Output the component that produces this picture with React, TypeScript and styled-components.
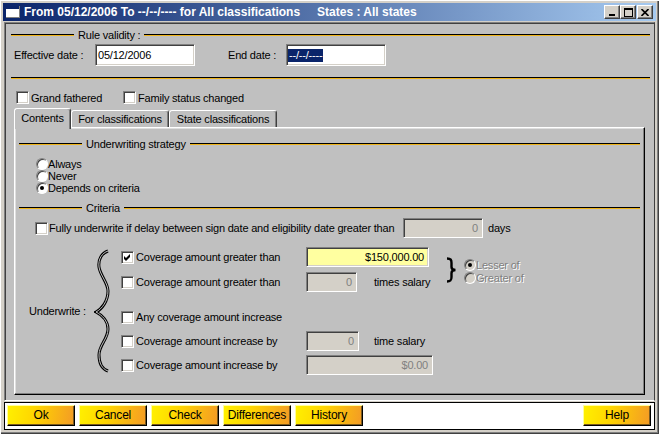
import React from 'react';
import styled, { createGlobalStyle } from 'styled-components';

const GlobalStyle = createGlobalStyle`
  * { box-sizing: border-box; }
  html, body { margin: 0; padding: 0; background: #d4d0c8; }
  body {
    font-family: 'Liberation Sans', Arial, sans-serif;
    font-size: 11px;
    letter-spacing: -0.2px;
    color: #000;
  }
`;

const Window = styled.div`
  width: 659px;
  height: 434px;
  padding: 3px 3px 4px 3px;
  background: #d4d0c8;
  box-shadow: inset 1px 1px 0 #fff, inset -1px -1px 0 #404040, inset -2px -2px 0 #808080;
  display: flex;
  flex-direction: column;
`;

const TitleBar = styled.div`
  height: 18px;
  flex: none;
  display: flex;
  align-items: center;
  padding: 0 3px 0 3px;
  background: linear-gradient(to right, #0a246a, #a6caf0);
  color: #fff;
  font-family: 'Liberation Sans', Arial, sans-serif;
  font-weight: bold;
  font-size: 12px;
  letter-spacing: 0;
  white-space: pre;
`;

const TitleText = styled.span`
  margin-left: 4px;
`;

const TitleExtra = styled.span`
  margin-left: 17px;
`;

const WinButtons = styled.div`
  margin-left: auto;
  display: flex;
`;

const WinButton = styled.div<{ $gap?: number }>`
  width: 16px;
  height: 14px;
  margin-left: ${p => p.$gap ?? 0}px;
  background: #d4d0c8;
  border: 1px solid;
  border-color: #fff #404040 #404040 #fff;
  box-shadow: inset -1px -1px 0 #808080;
  display: flex;
  align-items: center;
  justify-content: center;
`;

const Client = styled.div`
  height: 379px;
  flex: none;
  margin: 1px 1px 0;
  border: 1px solid;
  border-color: #808080 #404040 #fff #808080;
  box-shadow: inset 1px 1px 0 #404040;
  background: #c0c0c0;
  padding: 5px 4px 0 6px;
  display: flex;
  flex-direction: column;
`;

const Section = styled.div<{ $mt?: number }>`
  display: flex;
  align-items: center;
  height: 14px;
  flex: none;
  margin-top: ${p => p.$mt ?? 0}px;
`;

const Rule = styled.div<{ $w?: number }>`
  height: 2px;
  flex: ${p => (p.$w ? `0 0 ${p.$w}px` : '1')};
  background: linear-gradient(#000 50%, #f0b418 50%);
`;

const SectionLabel = styled.span`
  padding: 0 4px;
  line-height: 14px;
  white-space: nowrap;
`;

const DateRow = styled.div`
  display: flex;
  align-items: center;
  height: 22px;
  flex: none;
  margin-top: 2px;
  padding-left: 3px;
`;

const FieldLabel = styled.span<{ $w: number; $ml?: number }>`
  width: ${p => p.$w}px;
  margin-left: ${p => p.$ml ?? 0}px;
  white-space: nowrap;
`;

type Tone = 'white' | 'yellow' | 'off';

const Field = styled.div<{ $w: number; $h?: number; $tone?: Tone; $right?: boolean; $pl?: number }>`
  width: ${p => p.$w}px;
  height: ${p => p.$h ?? 20}px;
  flex: none;
  border: 1px solid;
  border-color: #808080 #fff #fff #808080;
  box-shadow: inset 1px 1px 0 #404040, inset -1px -1px 0 #d4d0c8;
  background: ${p => (p.$tone === 'yellow' ? '#ffffa0' : p.$tone === 'off' ? '#d4d0c8' : '#fff')};
  color: ${p => (p.$tone === 'off' ? '#808080' : '#000')};
  display: flex;
  align-items: center;
  justify-content: ${p => (p.$right ? 'flex-end' : 'flex-start')};
  padding: 0 4px 0 ${p => p.$pl ?? 2}px;
  line-height: 13px;
  white-space: nowrap;
`;

const Selection = styled.span`
  background: #0a246a;
  color: #fff;
  padding: 0 1px;
  line-height: 13px;
`;

const CheckRow = styled.div`
  display: flex;
  align-items: center;
  height: 13px;
  flex: none;
  margin-top: 6px;
  padding-left: 5px;
`;

const CheckItem = styled.div<{ $w?: number }>`
  display: flex;
  align-items: center;
  gap: 2px;
  ${p => (p.$w ? `width: ${p.$w}px;` : '')}
  white-space: nowrap;
`;

const Box = styled.div`
  width: 13px;
  height: 13px;
  flex: none;
  border: 1px solid;
  border-color: #808080 #fff #fff #808080;
  box-shadow: inset 1px 1px 0 #404040, inset -1px -1px 0 #d4d0c8;
  background: #fff;
  display: flex;
  align-items: center;
  justify-content: center;
`;

const Checkbox = ({ checked }: { checked?: boolean }) => (
  <Box>
    {checked && (
      <svg width="7" height="7" viewBox="0 0 7 7">
        <path d="M0 2 L2 4 L6 0 L6 3 L2 7 L0 5 Z" fill="#000" />
      </svg>
    )}
  </Box>
);

const TabStrip = styled.div`
  display: flex;
  align-items: flex-end;
  height: 19px;
  flex: none;
  margin: 4px 0 0 3px;
  position: relative;
  z-index: 1;
`;

const Tab = styled.div<{ $w: number; $active?: boolean }>`
  width: ${p => p.$w}px;
  height: ${p => (p.$active ? 21 : 17)}px;
  margin-bottom: ${p => (p.$active ? -2 : 0)}px;
  padding-bottom: ${p => (p.$active ? 3 : 0)}px;
  background: #c0c0c0;
  border: 1px solid;
  border-bottom: none;
  border-color: #fff #404040 transparent #fff;
  box-shadow: inset -1px 0 0 #808080;
  border-radius: 3px 3px 0 0;
  display: flex;
  align-items: center;
  justify-content: center;
  white-space: nowrap;
`;

const TabPanel = styled.div`
  flex: 1;
  margin: 0 5px 5px 3px;
  border: 1px solid;
  border-color: #fff #000 #000 #fff;
  box-shadow: inset -1px -1px 0 #808080, inset 1px 1px 0 #dfdfdf;
  padding: 9px 4px 0 4px;
  display: flex;
  flex-direction: column;
`;

const RadioList = styled.div`
  margin-top: 7px;
  padding-left: 17px;
  display: flex;
  flex-direction: column;
`;

const RadioRow = styled.div<{ $h?: number }>`
  height: ${p => p.$h ?? 12}px;
  display: flex;
  align-items: center;
  white-space: nowrap;
`;

const RadioCircle = styled.div<{ $off?: boolean }>`
  width: 12px;
  height: 12px;
  flex: none;
  border-radius: 50%;
  border: 1px solid;
  border-color: #808080 #fff #fff #808080;
  box-shadow: inset 1px 1px 0 #404040;
  background: ${p => (p.$off ? '#d4d0c8' : '#fff')};
  display: flex;
  align-items: center;
  justify-content: center;
`;

const RadioDot = styled.div`
  width: 4px;
  height: 4px;
  border-radius: 50%;
  background: #000;
`;

const RadioText = styled.span<{ $off?: boolean }>`
  color: ${p => (p.$off ? '#808080' : '#000')};
  text-shadow: ${p => (p.$off ? '1px 1px 0 #fff' : 'none')};
`;

const Radio = ({ label, on, off, h }: { label: string; on?: boolean; off?: boolean; h?: number }) => (
  <RadioRow $h={h}>
    <RadioCircle $off={off}>{on && <RadioDot />}</RadioCircle>
    <RadioText $off={off}>{label}</RadioText>
  </RadioRow>
);

const FullyRow = styled.div`
  display: flex;
  align-items: center;
  height: 20px;
  margin-top: 3px;
  padding-left: 16px;
`;

const FullyText = styled.span`
  width: 354px;
  margin-left: 1px;
  white-space: nowrap;
`;

const Unit = styled.span<{ $ml?: number }>`
  margin-left: ${p => p.$ml ?? 0}px;
  white-space: nowrap;
`;

const CoverageBlock = styled.div`
  display: grid;
  grid-template-columns: 65px 16px 1fr;
  align-items: center;
  margin: 9px 0 0 10px;
`;

const UnderwriteLabel = styled.span`
  white-space: nowrap;
`;

const CoverageGrid = styled.div`
  margin-left: 11px;
  display: grid;
  grid-template-columns: 185px 68px 71px auto;
  grid-template-rows: 25px 35px 24px 24px 20px;
  align-items: start;
`;

const CovCheck = styled.div<{ $row: number }>`
  grid-column: 1;
  grid-row: ${p => p.$row};
  height: 20px;
  display: flex;
  align-items: center;
  gap: 2px;
  white-space: nowrap;
`;

const CovCell = styled.div<{ $row: number; $col: string }>`
  grid-row: ${p => p.$row};
  grid-column: ${p => p.$col};
  height: 20px;
  display: flex;
  align-items: center;
  white-space: nowrap;
`;

const BraceGroup = styled.div`
  grid-column: 4;
  grid-row: 1 / span 2;
  padding-top: 10px;
  display: flex;
  align-items: flex-start;
`;

const RadioStack = styled.div`
  margin-left: 7px;
  margin-top: 1px;
  display: flex;
  flex-direction: column;
`;

const ButtonBar = styled.div`
  height: 28px;
  flex: none;
  margin: 1px 1px 0;
  background: #fff;
  border: 1px solid #000;
  padding: 2px 3px 0 2px;
  display: flex;
  align-items: flex-start;
  gap: 4px;
`;

const YellowButton = styled.div<{ $push?: boolean }>`
  width: 68px;
  height: 21px;
  margin-left: ${p => (p.$push ? 'auto' : '0')};
  background: linear-gradient(100deg, #fff000 0%, #ffd500 40%, #f39a26 100%);
  border: 1px solid;
  border-color: #ffff9a #000 #000 #ffff9a;
  box-shadow: inset -1px -1px 0 #7a5a20;
  display: flex;
  align-items: center;
  justify-content: center;
  font-size: 12px;
  line-height: 13px;
  white-space: nowrap;
`;

const LeftBrace = () => (
  <svg width="16" height="125" viewBox="0 0 16 125">
    <path
      d="M14 2 C8 4 4 10 5 18 C6 26 14 34 14 42 C14 52 8 60 2 63 C8 66 14 72 14 80 C14 90 5 96 5 106 C5 114 8 120 14 122"
      fill="none"
      stroke="#000"
      strokeWidth="3"
    />
    <path
      d="M14 2 C8 4 4 10 5 18 C6 26 14 34 14 42 C14 52 8 60 2 63 C8 66 14 72 14 80 C14 90 5 96 5 106 C5 114 8 120 14 122"
      fill="none"
      stroke="#c0c0c0"
      strokeWidth="1"
    />
  </svg>
);

const RightBrace = () => (
  <svg width="12" height="26" viewBox="0 0 12 26">
    <path
      d="M2 1.5 C6 1.5 6.5 3 6.5 6 L6.5 10 C6.5 12 8 13 10.5 13 C8 13 6.5 14 6.5 16 L6.5 20 C6.5 23 6 24.5 2 24.5"
      fill="none"
      stroke="#000"
      strokeWidth="2.4"
    />
  </svg>
);

export default function App() {
  return (
    <>
      <GlobalStyle />
      <Window>
        <TitleBar>
          <svg width="14" height="12" viewBox="0 0 14 12">
            <rect x="0" y="0" width="14" height="12" fill="#fff" />
            <rect x="0" y="0" width="14" height="3" fill="#0a246a" />
            <rect x="13" y="0" width="1" height="12" fill="#808080" />
            <rect x="0" y="11" width="14" height="1" fill="#808080" />
          </svg>
          <TitleText>
            From 05/12/2006 To --/--/---- for All classifications
            <TitleExtra>States : All states</TitleExtra>
          </TitleText>
          <WinButtons>
            <WinButton>
              <svg width="8" height="8" viewBox="0 0 8 8">
                <rect x="1" y="6" width="6" height="2" fill="#000" />
              </svg>
            </WinButton>
            <WinButton>
              <svg width="9" height="9" viewBox="0 0 9 9">
                <path d="M0 0 H9 V9 H0 Z M1 2 V8 H8 V2 Z" fill="#000" fillRule="evenodd" />
              </svg>
            </WinButton>
            <WinButton $gap={1}>
              <svg width="8" height="7" viewBox="0 0 8 7">
                <path d="M0.5 0 L7.5 7 M7.5 0 L0.5 7" stroke="#000" strokeWidth="1.6" />
              </svg>
            </WinButton>
          </WinButtons>
        </TitleBar>

        <Client>
          <Section>
            <Rule $w={63} />
            <SectionLabel>Rule validity :</SectionLabel>
            <Rule />
          </Section>
          <DateRow>
            <FieldLabel $w={81}>Effective date :</FieldLabel>
            <Field $w={100} $h={22}>05/12/2006</Field>
            <FieldLabel $w={58} $ml={33}>End date :</FieldLabel>
            <Field $w={100} $h={22} $pl={1}>
              <Selection>--/--/----</Selection>
            </Field>
          </DateRow>
          <Section $mt={5}>
            <Rule />
          </Section>
          <CheckRow>
            <CheckItem $w={107}>
              <Checkbox />
              <span>Grand fathered</span>
            </CheckItem>
            <CheckItem>
              <Checkbox />
              <span>Family status changed</span>
            </CheckItem>
          </CheckRow>

          <TabStrip>
            <Tab $w={57} $active>Contents</Tab>
            <Tab $w={98}>For classifications</Tab>
            <Tab $w={108}>State classifications</Tab>
          </TabStrip>
          <TabPanel>
            <Section>
              <Rule $w={63} />
              <SectionLabel>Underwriting strategy</SectionLabel>
              <Rule />
            </Section>
            <RadioList>
              <Radio label="Always" />
              <Radio label="Never" />
              <Radio label="Depends on criteria" on />
            </RadioList>
            <Section $mt={7}>
              <Rule $w={63} />
              <SectionLabel>Criteria</SectionLabel>
              <Rule />
            </Section>
            <FullyRow>
              <Checkbox />
              <FullyText>Fully underwrite if delay between sign date and eligibility date greater than</FullyText>
              <Field $w={80} $tone="off" $right>0</Field>
              <Unit $ml={5}>days</Unit>
            </FullyRow>

            <CoverageBlock>
              <UnderwriteLabel>Underwrite :</UnderwriteLabel>
              <LeftBrace />
              <CoverageGrid>
                <CovCheck $row={1}>
                  <Checkbox checked />
                  <span>Coverage amount greater than</span>
                </CovCheck>
                <CovCell $row={1} $col="2 / span 2">
                  <Field $w={123} $tone="yellow" $right>$150,000.00</Field>
                </CovCell>
                <BraceGroup>
                  <RightBrace />
                  <RadioStack>
                    <Radio label="Lesser of" on off h={13} />
                    <Radio label="Greater of" off h={13} />
                  </RadioStack>
                </BraceGroup>

                <CovCheck $row={2}>
                  <Checkbox />
                  <span>Coverage amount greater than</span>
                </CovCheck>
                <CovCell $row={2} $col="2">
                  <Field $w={51} $tone="off" $right>0</Field>
                </CovCell>
                <CovCell $row={2} $col="3">times salary</CovCell>

                <CovCheck $row={3}>
                  <Checkbox />
                  <span>Any coverage amount increase</span>
                </CovCheck>

                <CovCheck $row={4}>
                  <Checkbox />
                  <span>Coverage amount increase by</span>
                </CovCheck>
                <CovCell $row={4} $col="2">
                  <Field $w={53} $tone="off" $right>0</Field>
                </CovCell>
                <CovCell $row={4} $col="3">time salary</CovCell>

                <CovCheck $row={5}>
                  <Checkbox />
                  <span>Coverage amount increase by</span>
                </CovCheck>
                <CovCell $row={5} $col="2 / span 2">
                  <Field $w={127} $tone="off" $right>$0.00</Field>
                </CovCell>
              </CoverageGrid>
            </CoverageBlock>
          </TabPanel>
        </Client>

        <ButtonBar>
          <YellowButton>Ok</YellowButton>
          <YellowButton>Cancel</YellowButton>
          <YellowButton>Check</YellowButton>
          <YellowButton>Differences</YellowButton>
          <YellowButton>History</YellowButton>
          <YellowButton $push>Help</YellowButton>
        </ButtonBar>
      </Window>
    </>
  );
}
